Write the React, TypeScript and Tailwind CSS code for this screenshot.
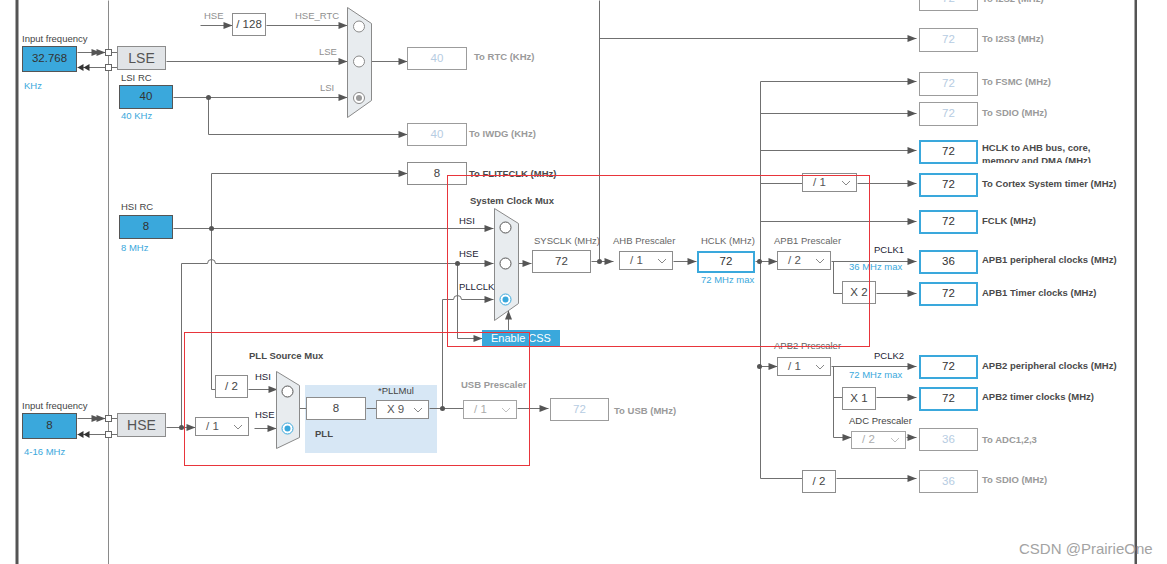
import React from "react";

type K = { c: string; children?: React.ReactNode };

function T({ c, children }: K) {
  return (
    <div className={`absolute whitespace-nowrap leading-[10px] text-[9.5px] ${c}`}>
      {children}
    </div>
  );
}

function Box({ c, v, kind = "plain" }: { c: string; v: string; kind?: "plain" | "dis" | "out" | "in" | "gray" }) {
  const k =
    kind === "plain"
      ? "border border-[#8c8c8c] bg-white text-[#444] text-[11.5px]"
      : kind === "dis"
      ? "border border-[#9c9c9c] bg-white text-[#b6cce2] text-[11.5px]"
      : kind === "out"
      ? "border-2 border-[#3aa8dc] bg-white text-[#333] text-[11.5px]"
      : kind === "in"
      ? "border border-[#555] bg-[#3aa8dc] text-[#333] text-[11.5px]"
      : "border border-[#8c8c8c] bg-[#e1e4e7] text-[#555] text-[14px]";
  return <div className={`absolute flex items-center justify-center leading-none ${k} ${c}`}>{v}</div>;
}

function Sel({ c, v, dis = false }: { c: string; v: string; dis?: boolean }) {
  return (
    <div
      className={`absolute flex items-center justify-between pl-[10px] pr-[5px] border bg-white text-[11.5px] leading-none ${
        dis ? "border-[#a4a4a4] text-[#ababab]" : "border-[#8c8c8c] text-[#555]"
      } ${c}`}
    >
      <span>{v}</span>
      <svg width="10" height="6" viewBox="0 0 10 6">
        <polyline points="1,1 5,5 9,1" fill="none" stroke={dis ? "#c0c0c0" : "#888"} strokeWidth="1" />
      </svg>
    </div>
  );
}

const lines = [
  "M77 52 H105",
  "M77 67 H105",
  "M111 52 H117",
  "M111 67 H117",
  "M77 418 H105",
  "M77 434 H105",
  "M111 418 H117",
  "M111 434 H117",
  "M200 25 H232",
  "M266 25 H347",
  "M166 61 H347",
  "M173 97 H347",
  "M208 97 V134 H407",
  "M371 61 H407",
  "M599 0 V261",
  "M599 38 H916",
  "M760 81 V478",
  "M760 81 H916",
  "M760 113 H916",
  "M760 150 H916",
  "M760 183 H802",
  "M857 183 H916",
  "M760 221 H916",
  "M755 261 H777",
  "M831 261 H916",
  "M833 261 V293 H842",
  "M876 293 H916",
  "M760 366 H777",
  "M831 366 H916",
  "M833 366 V437 H851",
  "M833 397 H842",
  "M876 397 H916",
  "M906 437 H916",
  "M760 478 H802",
  "M836 478 H916",
  "M173 228 H493",
  "M211 173 V389 H215",
  "M211 173 H407",
  "M248 389 H277",
  "M181 263 H207 A4 4 0 0 1 215 263 H493",
  "M181 263 V427",
  "M166 427 H195",
  "M254 428 H276",
  "M299 408 H306",
  "M366 408 H376",
  "M429 408 H463",
  "M442 408 V299 H453 A4 4 0 0 1 461 299 H493",
  "M517 408 H548",
  "M457 263 V338 H482",
  "M508 330 V310",
  "M518 263 H531",
  "M591 261 H613",
  "M673 261 H696",
];

const arrowsR: [number, number][] = [
  [100, 52], [105, 52], [100, 418], [105, 418],
  [232, 25], [347, 25], [347, 61], [347, 97], [407, 61], [407, 134], [407, 173],
  [916, 38], [916, 81], [916, 113], [916, 150], [916, 183], [916, 221],
  [777, 261], [916, 261], [916, 293], [777, 366], [916, 366], [851, 437], [916, 397], [916, 437], [916, 478],
  [493, 228], [493, 263], [493, 299], [277, 389], [195, 427], [276, 428], [548, 408], [482, 338],
  [531, 263], [613, 261], [696, 261],
];
const arrowsL: [number, number][] = [
  [77, 67], [83, 67], [77, 434], [83, 434],
];
const dots: [number, number][] = [
  [208, 97], [211, 228], [181, 427], [457, 263], [442, 408], [599, 261], [759, 261], [759, 366],
];

function Diagram() {
  return (
    <svg className="absolute left-0 top-0" width="1167" height="564" viewBox="0 0 1167 564">
      <rect x="15.5" y="0" width="3" height="564" fill="#545454" />
      <rect x="1134.5" y="0" width="2.5" height="564" fill="#545454" />
      <g transform="translate(0.5,0.5)">
        <line x1="108" y1="0" x2="108" y2="564" stroke="#8a8a8a" strokeWidth="1" />
        {lines.map((d, i) => (
          <path key={i} d={d} fill="none" stroke="#707070" strokeWidth="1" />
        ))}
        {arrowsR.map(([x, y], i) => (
          <polygon key={"r" + i} points={`${x},${y} ${x - 9},${y - 3.5} ${x - 9},${y + 3.5}`} fill="#555" />
        ))}
        {arrowsL.map(([x, y], i) => (
          <polygon key={"l" + i} points={`${x},${y} ${x + 6},${y - 3.5} ${x + 6},${y + 3.5}`} fill="#333" />
        ))}
        <polygon points="508,310 504.5,319 511.5,319" fill="#555" />
        {dots.map(([x, y], i) => (
          <circle key={"d" + i} cx={x} cy={y} r="2.5" fill="#555" />
        ))}
        <rect x="105" y="49" width="6" height="6" fill="#fff" stroke="#666" />
        <rect x="105" y="64" width="6" height="6" fill="#fff" stroke="#666" />
        <rect x="105" y="415" width="6" height="6" fill="#fff" stroke="#666" />
        <rect x="105" y="431" width="6" height="6" fill="#fff" stroke="#666" />

        <polygon points="347,7 371,23 371,100 347,117" fill="#e8ecef" stroke="#8a8a8a" />
        <circle cx="358.5" cy="26" r="5.5" fill="#fff" stroke="#8a8a8a" />
        <circle cx="358.5" cy="61" r="5.5" fill="#fff" stroke="#8a8a8a" />
        <circle cx="358.5" cy="97.5" r="5.5" fill="#fff" stroke="#8a8a8a" />
        <circle cx="358.5" cy="97.5" r="3" fill="#9a9a9a" />

        <polygon points="494,208 518,223 518,303 494,320" fill="#e8ecef" stroke="#8a8a8a" />
        <circle cx="505" cy="227" r="5.5" fill="#fff" stroke="#555" />
        <circle cx="505" cy="263" r="5.5" fill="#fff" stroke="#555" />
        <circle cx="505" cy="299" r="5.5" fill="#fff" stroke="#3aa8dc" />
        <circle cx="505" cy="299" r="3" fill="#3aa8dc" />

        <polygon points="276,371 299,385 299,437 276,448" fill="#e8ecef" stroke="#8a8a8a" />
        <circle cx="287" cy="391" r="5.5" fill="#fff" stroke="#555" />
        <circle cx="287" cy="428" r="5.5" fill="#fff" stroke="#3aa8dc" />
        <circle cx="287" cy="428" r="3" fill="#3aa8dc" />
      </g>
    </svg>
  );
}

const dark = "text-[#444]";
const grayT = "text-[#8f8f8f]";
const midT = "text-[#666]";
const blueT = "text-[#3aa8dc]";
const boldDark = "font-bold text-[#4a4a4a]";
const boldGray = "font-bold text-[#9a9a9a]";

export default function App() {
  return (
    <div className="relative w-[1167px] h-[564px] overflow-hidden bg-white font-['Liberation_Sans',Arial,sans-serif]">
      {/* PLL area */}
      <div className="absolute left-[305px] top-[385px] w-[132px] h-[68px] bg-[#d7e7f5]" />

      <Diagram />

      {/* Left inputs */}
      <T c={`left-[22px] top-[34px] ${dark}`}>Input frequency</T>
      <Box c="left-[22px] top-[46px] w-[55px] h-[26px]" v="32.768" kind="in" />
      <T c={`left-[24px] top-[81px] ${blueT}`}>KHz</T>
      <Box c="left-[117px] top-[46px] w-[49px] h-[24px]" v="LSE" kind="gray" />
      <T c={`left-[121px] top-[73px] ${dark}`}>LSI RC</T>
      <Box c="left-[119px] top-[85px] w-[54px] h-[24px]" v="40" kind="in" />
      <T c={`left-[121px] top-[111px] ${blueT}`}>40 KHz</T>

      <T c={`left-[121px] top-[202px] ${dark}`}>HSI RC</T>
      <Box c="left-[119px] top-[215px] w-[54px] h-[24px]" v="8" kind="in" />
      <T c={`left-[121px] top-[243px] ${blueT}`}>8 MHz</T>

      <T c={`left-[22px] top-[401px] ${dark}`}>Input frequency</T>
      <Box c="left-[22px] top-[413px] w-[55px] h-[26px]" v="8" kind="in" />
      <T c={`left-[24px] top-[447px] ${blueT}`}>4-16 MHz</T>
      <Box c="left-[117px] top-[413px] w-[49px] h-[24px]" v="HSE" kind="gray" />

      {/* RTC area */}
      <T c={`left-[204px] top-[11px] ${grayT}`}>HSE</T>
      <Box c="left-[232px] top-[13px] w-[34px] h-[23px]" v="/ 128" />
      <T c={`left-[295px] top-[11px] ${grayT}`}>HSE_RTC</T>
      <T c={`left-[319px] top-[47px] ${grayT}`}>LSE</T>
      <T c={`left-[320px] top-[83px] ${grayT}`}>LSI</T>
      <Box c="left-[407px] top-[47px] w-[60px] h-[23px]" v="40" kind="dis" />
      <T c={`left-[474px] top-[52px] ${boldGray}`}>To RTC (KHz)</T>
      <Box c="left-[407px] top-[123px] w-[60px] h-[23px]" v="40" kind="dis" />
      <T c={`left-[469px] top-[129px] ${boldGray}`}>To IWDG (KHz)</T>
      <Box c="left-[407px] top-[162px] w-[60px] h-[23px]" v="8" />
      <T c={`left-[469px] top-[169px] ${boldDark}`}>To FLITFCLK (MHz)</T>

      {/* System clock mux */}
      <T c={`left-[470px] top-[196px] ${boldDark}`}>System Clock Mux</T>
      <T c="left-[459px] top-[216px] text-[#223]">HSI</T>
      <T c="left-[459px] top-[249px] text-[#223]">HSE</T>
      <T c="left-[459px] top-[282px] text-[#223]">PLLCLK</T>
      <div className="absolute left-[482px] top-[330px] w-[78px] h-[17px] bg-[#3aa8dc] text-white text-[11px] leading-[17px] text-center">
        Enable CSS
      </div>
      <T c={`left-[534px] top-[236px] ${midT}`}>SYSCLK (MHz)</T>
      <Box c="left-[532px] top-[250px] w-[59px] h-[23px]" v="72" />
      <T c={`left-[613px] top-[236px] ${midT}`}>AHB Prescaler</T>
      <Sel c="left-[619px] top-[251px] w-[54px] h-[19px]" v="/ 1" />
      <T c={`left-[701px] top-[236px] ${midT}`}>HCLK (MHz)</T>
      <Box c="left-[697px] top-[251px] w-[58px] h-[22px]" v="72" kind="out" />
      <T c={`left-[701px] top-[275px] ${blueT}`}>72 MHz max</T>

      {/* PLL */}
      <T c={`left-[249px] top-[351px] ${boldDark}`}>PLL Source Mux</T>
      <Box c="left-[215px] top-[375px] w-[33px] h-[23px]" v="/ 2" />
      <T c="left-[255px] top-[372px] text-[#223]">HSI</T>
      <T c="left-[255px] top-[410px] text-[#223]">HSE</T>
      <Sel c="left-[195px] top-[417px] w-[54px] h-[19px]" v="/ 1" />
      <Box c="left-[306px] top-[397px] w-[60px] h-[23px]" v="8" />
      <T c={`left-[315px] top-[429px] ${boldDark}`}>PLL</T>
      <T c={`left-[378px] top-[386px] ${dark}`}>*PLLMul</T>
      <Sel c="left-[376px] top-[400px] w-[53px] h-[19px]" v="X 9" />
      <T c={`left-[461px] top-[380px] ${boldGray}`}>USB Prescaler</T>
      <Sel c="left-[463px] top-[400px] w-[54px] h-[19px]" v="/ 1" dis />
      <Box c="left-[550px] top-[398px] w-[59px] h-[23px]" v="72" kind="dis" />
      <T c={`left-[614px] top-[406px] ${boldGray}`}>To USB (MHz)</T>

      {/* Right outputs */}
      <Box c="left-[919px] top-[-13px] w-[59px] h-[24px]" v="72" kind="dis" />
      <T c={`left-[982px] top-[-6px] ${boldGray}`}>To I2S2 (MHz)</T>
      <Box c="left-[919px] top-[28px] w-[59px] h-[24px]" v="72" kind="dis" />
      <T c={`left-[982px] top-[34px] ${boldGray}`}>To I2S3 (MHz)</T>
      <Box c="left-[919px] top-[72px] w-[59px] h-[24px]" v="72" kind="dis" />
      <T c={`left-[982px] top-[77px] ${boldGray}`}>To FSMC (MHz)</T>
      <Box c="left-[919px] top-[102px] w-[59px] h-[24px]" v="72" kind="dis" />
      <T c={`left-[982px] top-[108px] ${boldGray}`}>To SDIO (MHz)</T>

      <Box c="left-[919px] top-[140px] w-[59px] h-[24px]" v="72" kind="out" />
      <div className={`absolute left-[982px] top-[141px] h-[22px] overflow-hidden whitespace-nowrap text-[9.5px] leading-[13px] ${boldDark}`}>
        HCLK to AHB bus, core,
        <br />
        memory and DMA (MHz)
      </div>
      <Sel c="left-[802px] top-[173px] w-[55px] h-[19px]" v="/ 1" />
      <Box c="left-[919px] top-[173px] w-[59px] h-[24px]" v="72" kind="out" />
      <T c={`left-[982px] top-[179px] ${boldDark}`}>To Cortex System timer (MHz)</T>
      <Box c="left-[919px] top-[210px] w-[59px] h-[24px]" v="72" kind="out" />
      <T c={`left-[982px] top-[216px] ${boldDark}`}>FCLK (MHz)</T>

      <T c={`left-[774px] top-[236px] ${midT}`}>APB1 Prescaler</T>
      <Sel c="left-[777px] top-[251px] w-[54px] h-[19px]" v="/ 2" />
      <T c="left-[874px] top-[245px] text-[#223]">PCLK1</T>
      <T c={`left-[849px] top-[262px] ${blueT}`}>36 MHz max</T>
      <Box c="left-[919px] top-[250px] w-[59px] h-[24px]" v="36" kind="out" />
      <T c={`left-[982px] top-[255px] ${boldDark}`}>APB1 peripheral clocks (MHz)</T>
      <Box c="left-[842px] top-[281px] w-[34px] h-[23px]" v="X 2" />
      <Box c="left-[919px] top-[282px] w-[59px] h-[24px]" v="72" kind="out" />
      <T c={`left-[982px] top-[288px] ${boldDark}`}>APB1 Timer clocks (MHz)</T>

      <T c={`left-[774px] top-[341px] ${midT}`}>APB2 Prescaler</T>
      <Sel c="left-[777px] top-[357px] w-[54px] h-[19px]" v="/ 1" />
      <T c="left-[874px] top-[351px] text-[#223]">PCLK2</T>
      <T c={`left-[849px] top-[370px] ${blueT}`}>72 MHz max</T>
      <Box c="left-[919px] top-[355px] w-[59px] h-[24px]" v="72" kind="out" />
      <T c={`left-[982px] top-[361px] ${boldDark}`}>APB2 peripheral clocks (MHz)</T>
      <Box c="left-[842px] top-[387px] w-[34px] h-[23px]" v="X 1" />
      <Box c="left-[919px] top-[387px] w-[59px] h-[24px]" v="72" kind="out" />
      <T c={`left-[982px] top-[392px] ${boldDark}`}>APB2 timer clocks (MHz)</T>
      <T c={`left-[849px] top-[416px] ${dark}`}>ADC Prescaler</T>
      <Sel c="left-[851px] top-[431px] w-[55px] h-[18px]" v="/ 2" dis />
      <Box c="left-[919px] top-[428px] w-[59px] h-[23px]" v="36" kind="dis" />
      <T c={`left-[982px] top-[435px] ${boldGray}`}>To ADC1,2,3</T>
      <Box c="left-[802px] top-[470px] w-[34px] h-[23px]" v="/ 2" />
      <Box c="left-[919px] top-[470px] w-[59px] h-[23px]" v="36" kind="dis" />
      <T c={`left-[982px] top-[475px] ${boldGray}`}>To SDIO (MHz)</T>

      {/* Red highlight boxes */}
      <div className="absolute left-[447px] top-[175px] w-[423px] h-[172px] border border-[#e8353b] pointer-events-none" />
      <div className="absolute left-[184px] top-[332px] w-[346px] h-[134px] border border-[#e8353b] pointer-events-none" />

      <div className="absolute left-[1019px] top-[540px] whitespace-nowrap text-[15px] leading-[18px] text-[#a3a3a3]">
        CSDN @PrairieOne
      </div>
    </div>
  );
}
